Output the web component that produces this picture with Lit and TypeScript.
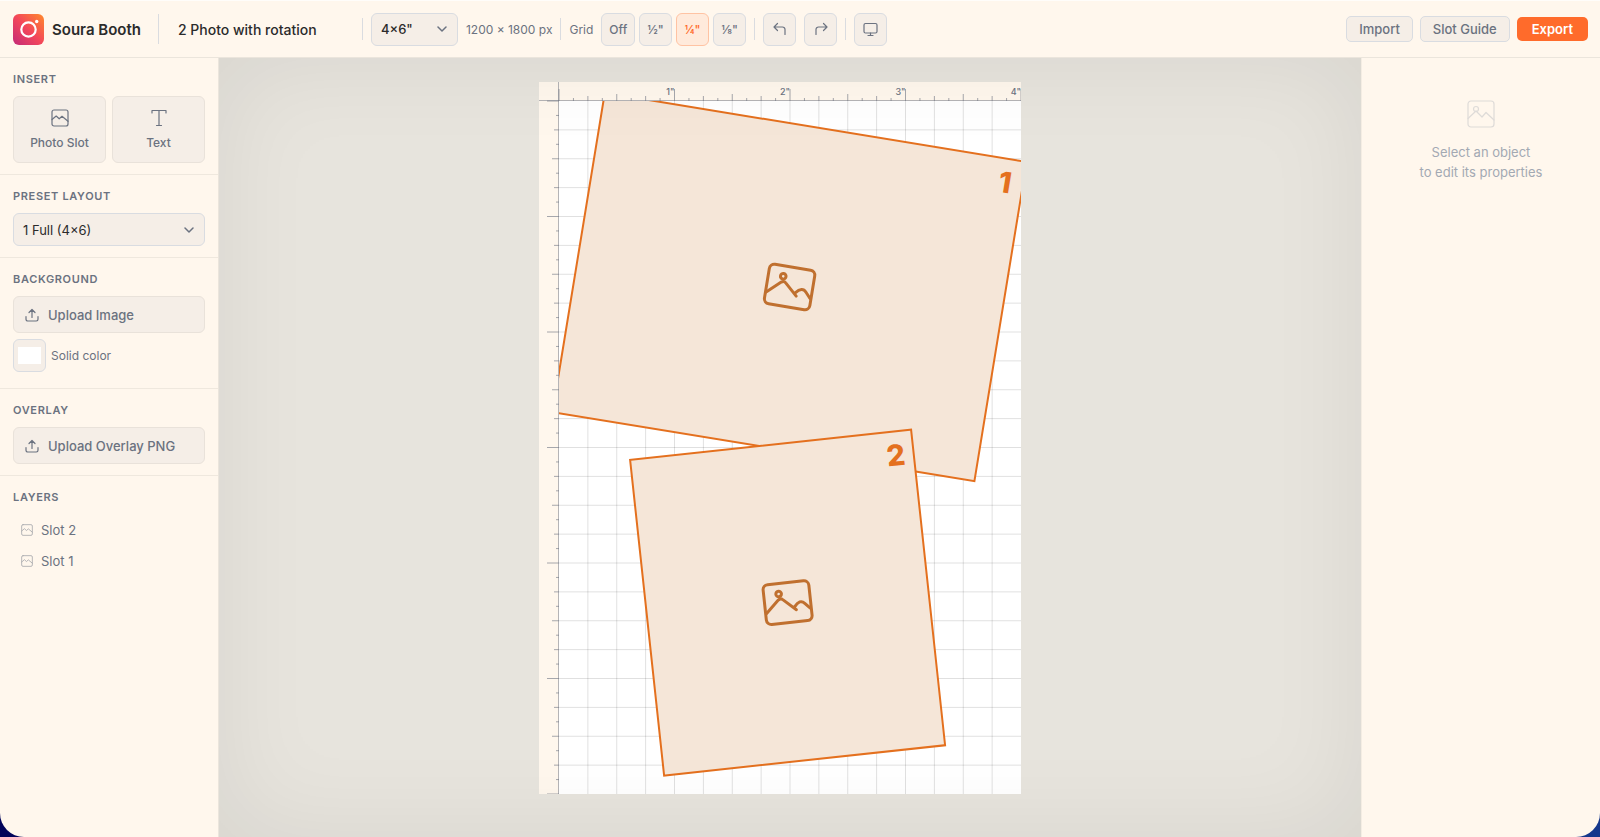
import { LitElement, html, svg, css } from "lit";
import { customElement, property, state } from "lit/decorators.js";
import { classMap } from "lit/directives/class-map.js";

const INCH = 115.5;
const RULER_X = 20;
const RULER_Y = 19;
const BOARD_W = INCH * 4;
const BOARD_H = INCH * 6;

interface Slot {
  id: number;
  cx: number;
  cy: number;
  w: number;
  h: number;
  angle: number;
}

const SLOTS: Slot[] = [
  { id: 1, cx: 230.6, cy: 186, w: 427.5, h: 323.5, angle: 9.3 },
  { id: 2, cx: 228.6, cy: 501.6, w: 282.6, h: 317.4, angle: -6.15 },
];

const chevron = html`<svg class="chevron" width="10" height="6" viewBox="0 0 10 6" aria-hidden="true">
  <path d="M1 1l4 4 4-4" />
</svg>`;

const photoIcon = (size: number) => html`<svg width=${size} height=${size} viewBox="0 0 18 18" aria-hidden="true">
  <rect x="1" y="1" width="16" height="16" rx="2" />
  <path d="M1 10.500L5.200 7l3 2.800L11 7.300l6 5" />
</svg>`;

const uploadIcon = html`<svg width="14" height="14" viewBox="0 0 14 14" aria-hidden="true">
  <path d="M1 8.5v2.8A1.7 1.7 0 0 0 2.7 13h8.6a1.7 1.7 0 0 0 1.7-1.7V8.5M7 9.5V1.8M4 4.5l3-3 3 3" />
</svg>`;

@customElement("booth-artboard")
export class BoothArtboard extends LitElement {
  static styles = css`
    :host { display: block; height: 100%; }
    .board { display: block; height: 100%; width: auto; }
    .paper { fill: #ffffff; }
    .ruler { fill: #fff7ed; }
    .grid { stroke: #000000; stroke-opacity: 0.12; stroke-width: 1; fill: none; }
    .tick { stroke: #6b7280; stroke-opacity: 0.6; stroke-width: 1; fill: none; }
    .axis { stroke: #6b7280; stroke-opacity: 0.5; stroke-width: 1; }
    .mark { font: 500 9px Inter, sans-serif; fill: #6b7280; text-anchor: end; }
    .slot { fill: #f5e6d8; stroke: #e4701e; stroke-width: 2; }
    .number { font: 800 29px Inter, sans-serif; fill: #e4701e; text-anchor: middle; }
    .glyph { fill: none; stroke: #c0702f; stroke-width: 3; stroke-linecap: round; stroke-linejoin: round; }
  `;

  private tick(i: number) {
    return i % 8 === 0 ? 12 : i % 4 === 0 ? 7 : i % 2 === 0 ? 5 : 3;
  }

  private topTicks() {
    let d = "";
    for (let i = 0; i <= 32; i++) {
      const x = RULER_X + (i * INCH) / 8;
      d += `M${x} ${RULER_Y}V${RULER_Y - this.tick(i)}`;
    }
    return d;
  }

  private sideTicks() {
    let d = "";
    for (let i = 0; i <= 48; i++) {
      const y = RULER_Y + (i * INCH) / 8;
      d += `M${RULER_X} ${y}H${RULER_X - this.tick(i)}`;
    }
    return d;
  }

  private gridPath() {
    let d = "";
    for (let i = 1; i < 16; i++) d += `M${(i * INCH) / 4} 0V${BOARD_H}`;
    for (let i = 1; i < 24; i++) d += `M0 ${(i * INCH) / 4}H${BOARD_W}`;
    return d;
  }

  private slotShape(s: Slot) {
    return svg`<g transform="translate(${s.cx} ${s.cy}) rotate(${s.angle})">
      <rect class="slot" x=${-s.w / 2} y=${-s.h / 2} width=${s.w} height=${s.h} />
      <text class="number" x=${s.w / 2 - 18} y=${-s.h / 2 + 34}>${s.id}</text>
      <g class="glyph">
        <rect x="-23" y="-20" width="46" height="40" rx="5" />
        <circle cx="-8" cy="-9.5" r="2.8" />
        <path d="M-22 8.5L-9 -3.5Q-6.5 -5.5 -4.5 -3.5L8 8M6.5 5Q12.500 -2.500 17 2.500L22 8" />
      </g>
    </g>`;
  }

  render() {
    return html`<svg class="board" viewBox="0 0 482 712" role="img" aria-label="4 by 6 inch layout">
      <defs><clipPath id="paper"><rect width=${BOARD_W} height=${BOARD_H} /></clipPath></defs>
      <rect class="ruler" width="482" height="712" />
      <g transform="translate(${RULER_X} ${RULER_Y})" clip-path="url(#paper)">
        <rect class="paper" width=${BOARD_W} height=${BOARD_H} />
        <path class="grid" d=${this.gridPath()} />
        ${SLOTS.map((s) => this.slotShape(s))}
      </g>
      <path class="tick" d=${this.topTicks()} />
      <path class="tick" d=${this.sideTicks()} />
      <path class="axis" d="M0 18.500H482M19.500 0V712" />
      ${[1, 2, 3, 4].map((n) => svg`<text class="mark" x=${RULER_X + n * INCH} y="13">${n}"</text>`)}
    </svg>`;
  }
}

@customElement("app-root")
export class AppRoot extends LitElement {
  @property() name = "2 Photo with rotation";
  @state() private grid = '¼"';

  static styles = css`
    :host {
      display: block;
      height: 100vh;
      background: linear-gradient(90deg, #02045a, #16388c);
      font-family: Inter, sans-serif;
      font-size: 13px;
      color: #2b2b2b;
    }
    * { box-sizing: border-box; }
    svg { fill: none; stroke: currentColor; stroke-width: 1.2; stroke-linecap: round; stroke-linejoin: round; flex: none; }
    button, input, select { font: inherit; color: inherit; margin: 0; }
    button { cursor: pointer; }
    .shell {
      display: grid;
      grid-template: 58px minmax(0, 1fr) / 219px minmax(0, 1fr) 239px;
      height: 100%;
      background: #fff7ed;
      overflow: hidden;
      border-radius: 0 0 24px 24px;
    }
    .header {
      grid-column: 1 / -1;
      display: flex;
      align-items: center;
      padding: 0 12px 0 13px;
      border-top: 1px solid #fffdfa;
      border-bottom: 1px solid #ebe5dc;
    }
    .logo { stroke: none; }
    .brand { margin: 0 17px 0 8px; font-size: 15px; font-weight: 600; white-space: nowrap; }
    .rule { width: 1px; height: 22px; background: #dadce0; flex: none; }
    .rule.tall { height: 30px; }
    .name {
      width: 193px;
      margin: 0 0 0 10px;
      padding: 0 8px;
      border: 1px solid transparent;
      background: none;
      font-size: 14px;
      font-weight: 500;
    }
    .tools { display: flex; align-items: center; gap: 8px; }
    .picker { position: relative; display: flex; align-items: center; }
    .picker select {
      appearance: none;
      width: 100%;
      height: 33px;
      padding: 0 28px 0 9px;
      border: 1px solid #d9dce1;
      border-radius: 6px;
      background: #f5eee7;
    }
    .picker .chevron { position: absolute; right: 11px; color: #6b7280; pointer-events: none; stroke-width: 1.5; }
    .size { width: 87px; }
    .size select { font-weight: 500; }
    .muted { font-size: 12px; color: #6b7280; white-space: nowrap; }
    .grids { display: flex; gap: 4px; }
    .tool {
      display: flex;
      align-items: center;
      justify-content: center;
      min-width: 33px;
      height: 33px;
      padding: 0 7px;
      border: 1px solid #d9dce1;
      border-radius: 6px;
      background: #f5eee7;
      color: #6b7280;
      font-size: 12px;
      font-weight: 500;
    }
    .tool.on { background: #ffeadb; border-color: #ffc3a3; color: #ff6b2b; }
    .actions { display: flex; align-items: center; gap: 7px; margin-left: auto; }
    .action {
      height: 26px;
      padding: 0 12px;
      border: 1px solid #d9dce1;
      border-radius: 5px;
      background: #f5eee7;
      color: #6b7280;
      font-weight: 500;
      white-space: nowrap;
    }
    .action.primary { height: 24px; padding: 0 15px; border: 0; background: #ff6b2b; color: #ffffff; font-weight: 600; }
    .side { border-right: 1px solid #ebe5dc; }
    .section { padding: 13px 13px 11px; border-bottom: 1px solid #efe8de; }
    .section.last { border: 0; }
    .title { margin: 0 0 9px; font-size: 11px; line-height: 16px; font-weight: 600; letter-spacing: 0.06em; color: #6b7280; }
    .pair { display: grid; grid-template-columns: 1fr 1fr; gap: 6px; }
    .insert, .upload {
      display: flex;
      align-items: center;
      border: 1px solid #e9e2da;
      border-radius: 6px;
      background: #f5eee7;
      color: #6b7280;
      font-weight: 500;
    }
    .insert { flex-direction: column; justify-content: center; gap: 8px; height: 67px; padding: 0; font-size: 12px; line-height: 16px; }
    .upload { width: 100%; height: 37px; gap: 9px; padding: 0 11px; }
    .color { display: flex; align-items: center; gap: 5px; margin: 6px 0 5px; }
    .swatch {
      appearance: none;
      width: 33px;
      height: 33px;
      padding: 7px 4px;
      border: 1px solid #d9dce1;
      border-radius: 6px;
      background: #f5eee7;
    }
    .swatch::-webkit-color-swatch-wrapper { padding: 0; }
    .swatch::-webkit-color-swatch { border: 0; border-radius: 0; }
    .layers { margin: 0; padding: 0; list-style: none; }
    .layer { display: flex; align-items: center; gap: 8px; width: 100%; height: 31px; padding: 0 8px; border: 0; background: none; color: #6b7280; }
    .layer svg { opacity: 0.6; }
    .stage { position: relative; display: flex; justify-content: center; min-height: 0; padding: 24px 20px 43px 0; background: #e7e4dd; }
    .stage::after {
      content: "";
      position: absolute;
      inset: 0;
      box-shadow: inset 0 0 100px rgba(0, 0, 0, 0.07);
      pointer-events: none;
    }
    .props { display: flex; flex-direction: column; align-items: center; padding-top: 42px; border-left: 1px solid #f4ede3; color: #a3a9b3; text-align: center; line-height: 20px; }
    .props svg { opacity: 0.35; }
    .props p { margin: 14px 0 0; }
  `;

  render() {
    return html`<div class="shell">
      <header class="header">
        <svg class="logo" width="31" height="31" viewBox="0 0 31 31" aria-hidden="true">
          <defs>
            <linearGradient id="brand" x1="0" y1="1" x2="1" y2="0">
              <stop offset="0" stop-color="#c32a78" />
              <stop offset=".5" stop-color="#f3475a" />
              <stop offset="1" stop-color="#ff8a2b" />
            </linearGradient>
          </defs>
          <rect width="31" height="31" rx="6" fill="url(#brand)" />
          <circle cx="15.500" cy="15.500" r="7.200" fill="none" stroke="#fff" stroke-width="2.2" />
          <circle cx="23.700" cy="7.500" r="1.700" fill="#fff" />
        </svg>
        <span class="brand">Soura Booth</span>
        <span class="rule tall"></span>
        <input class="name" aria-label="Layout name" .value=${this.name} />
        <div class="tools">
          <span class="rule"></span>
          <div class="picker size">
            <select aria-label="Print size"><option>4×6"</option></select>${chevron}
          </div>
          <span class="muted">1200 × 1800 px</span>
          <span class="rule"></span>
          <span class="muted">Grid</span>
          <div class="grids">
            ${["Off", '½"', '¼"', '⅛"'].map(
              (g) => html`<button class=${classMap({ tool: true, on: g === this.grid })} @click=${() => (this.grid = g)}>${g}</button>`
            )}
          </div>
          <span class="rule"></span>
          <button class="tool" aria-label="Undo">
            <svg width="14" height="14" viewBox="0 0 14 14"><path d="M4.500 1.500L1 5l3.500 3.500M1 5h8.500A2.500 2.500 0 0 1 12 7.500V12.500" /></svg>
          </button>
          <button class="tool" aria-label="Redo">
            <svg width="14" height="14" viewBox="0 0 14 14"><path d="M9.500 1.500L13 5 9.500 8.500M13 5H4.500A2.500 2.500 0 0 0 2 7.500V12.500" /></svg>
          </button>
          <span class="rule"></span>
          <button class="tool" aria-label="Preview">
            <svg width="15" height="15" viewBox="0 0 15 15"><rect x="1" y="1.500" width="13" height="9.500" rx="1.500" /><path d="M7.500 11v2.500M5 13.500h5" /></svg>
          </button>
        </div>
        <div class="actions">
          <button class="action">Import</button>
          <button class="action">Slot Guide</button>
          <button class="action primary">Export</button>
        </div>
      </header>

      <aside class="side">
        <section class="section">
          <h2 class="title">INSERT</h2>
          <div class="pair">
            <button class="insert">${photoIcon(18)}Photo Slot</button>
            <button class="insert">
              <svg width="18" height="18" viewBox="0 0 18 18" aria-hidden="true"><path d="M2 4V1.500h14V4M9 1.500v15M6.500 16.500h5" /></svg>Text
            </button>
          </div>
        </section>
        <section class="section">
          <h2 class="title">PRESET LAYOUT</h2>
          <div class="picker">
            <select aria-label="Preset layout"><option>1 Full (4×6)</option></select>${chevron}
          </div>
        </section>
        <section class="section">
          <h2 class="title">BACKGROUND</h2>
          <button class="upload">${uploadIcon}Upload Image</button>
          <div class="color">
            <input class="swatch" id="solid" type="color" value="#ffffff" />
            <label class="muted" for="solid">Solid color</label>
          </div>
        </section>
        <section class="section">
          <h2 class="title">OVERLAY</h2>
          <button class="upload">${uploadIcon}Upload Overlay PNG</button>
        </section>
        <section class="section last">
          <h2 class="title">LAYERS</h2>
          <ul class="layers">
            ${[...SLOTS].reverse().map((s) => html`<li><button class="layer">${photoIcon(12)}Slot ${s.id}</button></li>`)}
          </ul>
        </section>
      </aside>

      <main class="stage"><booth-artboard></booth-artboard></main>

      <aside class="props">
        <svg width="28" height="28" viewBox="0 0 28 28" aria-hidden="true">
          <rect x="1" y="1" width="26" height="26" rx="3" />
          <circle cx="9" cy="9" r="2.500" />
          <path d="M1 18.500l8-7.500 6 6 4-4.500 8 7.500" />
        </svg>
        <p>Select an object<br />to edit its properties</p>
      </aside>
    </div>`;
  }
}
